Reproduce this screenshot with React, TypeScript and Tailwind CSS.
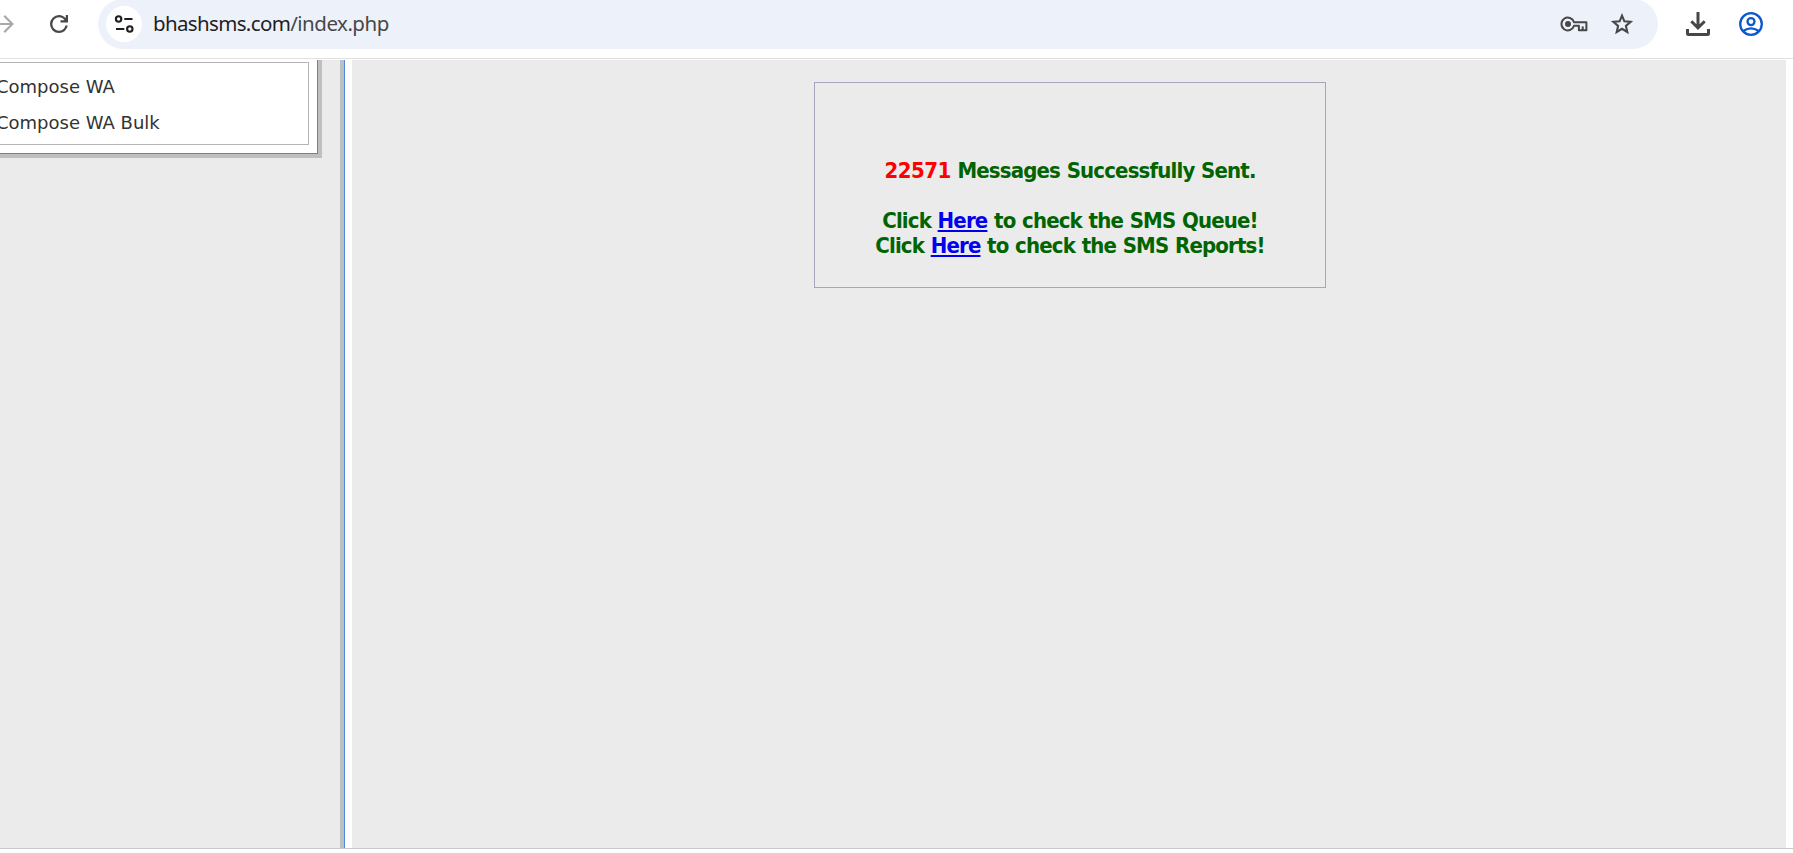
function ForwardIcon() {
  return (
    <svg className="h-6 w-4 shrink-0" viewBox="0 0 16 24" fill="none" stroke="#a9a9a9" strokeWidth="2.2">
      <path d="M0 12H12.5M4.2 3.8L12.4 12L4.2 20.2" />
    </svg>
  );
}

function ReloadIcon() {
  return (
    <svg className="h-6 w-6 shrink-0" viewBox="0 0 24 24" fill="#474747">
      <path d="M12 21q-3.75 0-6.375-2.625T3 12t2.625-6.375T12 3q2.05 0 3.825.875T18.75 6.2V3H21v7.5h-7.5V8.25h4.05q-.9-1.35-2.35-2.13T12 5.3q-2.8 0-4.75 1.95T5.3 12t1.95 4.75T12 18.7q2.4 0 4.2-1.5T18.4 13.5h2.35q-.6 3.25-3.05 5.375T12 21z" />
    </svg>
  );
}

function TuneIcon() {
  return (
    <svg className="h-5 w-5" viewBox="0 0 20 20" fill="none" stroke="#1f1f1f" strokeWidth="2.1">
      <circle cx="4.6" cy="5" r="2.7" />
      <path d="M10.3 5H18.5M2 15H10.3" />
      <circle cx="15.8" cy="15" r="2.7" />
    </svg>
  );
}

function KeyIcon() {
  return (
    <svg className="h-4 w-7" viewBox="0 0 28 16" fill="none" stroke="#474747" strokeWidth="2" strokeLinejoin="round">
      <path d="M14 6.2A6.4 6.4 0 1 0 14 9.8H18.9V14.3H26.4V6.2Z" />
      <circle cx="8" cy="8" r="3" fill="#474747" stroke="none" />
      <path d="M22.7 14V10.4" />
    </svg>
  );
}

function StarIcon() {
  return (
    <svg className="h-6 w-6" viewBox="0 0 24 24" fill="none" stroke="#474747" strokeWidth="2.1">
      <path d="M12 3.6L14.4 9.3L20.6 9.8L15.9 13.9L17.3 20L12 16.8L6.7 20L8.1 13.9L3.4 9.8L9.6 9.3Z" />
    </svg>
  );
}

function DownloadIcon() {
  return (
    <svg className="h-6 w-6" viewBox="0 0 24 24" fill="none" stroke="#474747" strokeWidth="3">
      <path d="M12 0V16M5.3 9.2L12 15.9L18.7 9.2" />
      <path d="M1.5 17V21.5Q1.5 22.5 2.5 22.5H21.5Q22.5 22.5 22.5 21.5V17" />
    </svg>
  );
}

function ProfileIcon() {
  return (
    <svg className="h-6 w-6" viewBox="0 0 24 24" fill="none" stroke="#0b57d0" strokeWidth="2.3">
      <circle cx="12" cy="12" r="10.8" />
      <circle cx="12" cy="9.6" r="3.5" />
      <path d="M4.4 19Q12 13.6 19.6 19" />
    </svg>
  );
}

function Toolbar() {
  return (
    <header className="flex h-[59px] shrink-0 items-start border-b border-[#e1e1e1] bg-white">
      <div className="flex h-12 w-[98px] items-center">
        <ForwardIcon />
        <div className="ml-[31px]">
          <ReloadIcon />
        </div>
      </div>
      <div className="-mt-px flex h-[50px] w-[1560px] items-center rounded-full bg-[#ecf1fa] pl-2">
        <div className="flex h-9 w-9 items-center justify-center rounded-full bg-white">
          <TuneIcon />
        </div>
        <div className="ml-[11px] flex-1 pb-0.5 font-['Noto_Sans','Open_Sans',sans-serif] text-[20.5px] leading-[48px] tracking-[-0.5px] text-[#474747]">
          <span className="tracking-[-0.65px] text-[#1f1f1f]">bhashsms.com</span>/index.php
        </div>
        <KeyIcon />
        <div className="mr-6 ml-[22px]">
          <StarIcon />
        </div>
      </div>
      <div className="flex h-12 items-center gap-[29px] pl-7">
        <DownloadIcon />
        <ProfileIcon />
      </div>
    </header>
  );
}

function Sidebar() {
  return (
    <aside className="w-[345px] shrink-0 border-r border-[#4a8ae0] bg-[#ebebeb]">
      <div className="h-full border-r-4 border-[#bfbfbf]">
        <div className="h-[98px] w-[322px] border-r-4 border-b-4 border-[#bfbfbf]">
          <div className="h-full border-r border-b border-[#5186d8] bg-white pt-0.5 pr-2 pb-2">
            <div className="h-[83px] border-y border-r border-[#b5b5b5] font-['DejaVu_Sans',sans-serif] text-[18px] leading-9 text-[#333333]">
              <nav className="-ml-1 flex flex-col pt-1.5">
                <a>Compose WA</a>
                <a>Compose WA Bulk</a>
              </nav>
            </div>
          </div>
        </div>
      </div>
    </aside>
  );
}

function HereLink() {
  return <a className="text-[#0000ee] underline decoration-2 underline-offset-2">Here</a>;
}

export default function App() {
  return (
    <div className="flex h-[853px] flex-col overflow-hidden bg-white">
      <Toolbar />
      <div className="mt-px flex h-[788px] shrink-0">
        <Sidebar />
        <main className="mr-[7px] ml-[7px] flex-1 bg-[#ebebeb] pt-[22px] pl-[462px]">
          <section className="h-[206px] w-[512px] border border-[#a5a5bb] pt-[75px] text-center font-['DejaVu_Sans_Condensed','DejaVu_Sans',sans-serif] text-[22px] leading-[25px] font-bold tracking-[-0.85px] [word-spacing:0.6px] whitespace-nowrap text-[#006400]">
            <p>
              <span className="tracking-[-0.5px] text-[#ff0000]">22571</span> Messages Successfully Sent.
            </p>
            <p className="mt-[25px]">
              Click <HereLink /> to check the SMS Queue!
            </p>
            <p>
              Click <HereLink /> to check the SMS Reports!
            </p>
          </section>
        </main>
      </div>
      <div className="h-px shrink-0 bg-[#c8c8c8]" />
    </div>
  );
}
